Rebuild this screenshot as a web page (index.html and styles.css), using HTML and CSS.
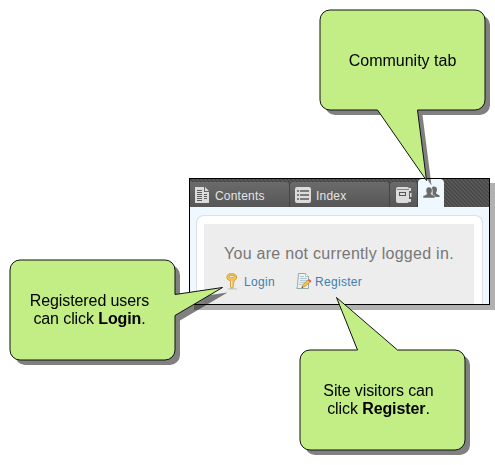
FILE: index.html
```html
<!DOCTYPE html>
<html lang="en">
<head>
<meta charset="utf-8">
<title>Community tab</title>
<link rel="stylesheet" href="styles.css">
</head>
<body>
<main class="panel">
  <nav class="tabs">
    <a class="tab contents">
      <svg width="15" height="17" viewBox="0 0 15 17"><path fill="#dcdcdc" d="M0 0h9v5h5v11H0z M10 0l4 4h-4z"/><path stroke="#5c5c5c" d="M2 3.500h5M2 5.500h5M2 7.500h5M2 9.500h5M2 11.500h5M2 13.500h5M9 7.500h3M9 9.500h3M9 11.500h3"/></svg>
      <span>Contents</span>
    </a>
    <a class="tab index">
      <svg width="16" height="17" viewBox="0 0 16 17"><rect width="16" height="16" rx="2" fill="#dcdcdc"/><path stroke="#5c5c5c" stroke-width="1.500" d="M2 4h2M5 4h9M2 8h2M5 8h9M2 12h2M5 12h9"/></svg>
      <span>Index</span>
    </a>
    <a class="tab book">
      <svg width="16" height="17" viewBox="0 0 16 17"><rect width="13" height="16" rx="2" fill="#dcdcdc"/><path fill="#dcdcdc" d="M13 1h2v3h-2zM14 6h1.500v4H14zM13 12h2v3h-2z"/><path stroke="#888" d="M1 2.500h12"/><rect x="3.500" y="5.500" width="6" height="3" fill="none" stroke="#555"/></svg>
    </a>
    <a class="tab active">
      <svg width="17" height="13" viewBox="0 0 17 13"><path fill="#6a6a6a" d="M9 1.500C10 0 14 0 14 3.500c0 2-1 2.500-1 4l3.500 2V11H10z"/><path fill="#6a6a6a" stroke="#eff7ff" stroke-width=".5" d="M0 12v-2l4-2C2.500 5.500 2.500 1 6 1s4 4.500 2 7l4 2v2z"/></svg>
    </a>
  </nav>
  <section class="frame">
    <div class="content">
      <h1>You are not currently logged in.</h1>
      <div class="links">
        <a class="login">
          <svg width="14" height="17" viewBox="0 0 14 17"><ellipse cx="8.500" cy="15.700" rx="5" ry="1" fill="#d0d0d0"/><path fill="#efc45c" stroke="#c39238" stroke-width=".8" d="M5 .8h5l2.500 2v3L9.800 8.300v1.500l-.8 1 .8 1-.8 1 .5 1L8 15.500 6.500 14V8.300L3 5.800v-3z"/><path stroke="#fff0a8" d="M7.700 8v6"/><rect x="5.500" y="2.500" width="4.500" height="1.700" rx=".8" fill="#fff" stroke="#b9852f" stroke-width=".6"/></svg>
          <span>Login</span>
        </a>
        <a class="register">
          <svg width="16" height="17" viewBox="0 0 16 17"><path fill="#e9f3f5" stroke="#98a9ad" d="M2.500.5h7l3 3v12H.8l.7-3z"/><path fill="#fff" stroke="#98a9ad" stroke-width=".7" d="M9.500.5v3h3"/><path stroke="#b5c8cd" d="M4 3.500h4M4 5.500h7M4 7.500h7M4 9.500h5M3 11.500h3"/><path fill="#f4c244" stroke="#a87c2a" stroke-width=".6" d="M6 14.500l1-3L12 7l2 2-5 4.500z"/><path fill="#e95050" d="M12 7l1-1 2.500 2-1 1.500z"/><path fill="#333" d="M5.500 15l.6-1.500 1 .9z"/></svg>
          <span>Register</span>
        </a>
      </div>
    </div>
  </section>
</main>
<svg class="bubbles" width="495" height="465" viewBox="0 0 495 465">
  <defs>
    <path id="community" d="M330 10H475a10 10 0 0 1 10 10V100a10 10 0 0 1-10 10H417.500L426.500 180.500 377.500 110H330a10 10 0 0 1-10-10V20a10 10 0 0 1 10-10z"/>
    <path id="login" d="M20 260H165a10 10 0 0 1 10 10V294.500L222.500 287.500 175 315.500V350a10 10 0 0 1-10 10H20a10 10 0 0 1-10-10V270a10 10 0 0 1 10-10z"/>
    <path id="register" d="M310 350H357.500L336.500 297.500 397.500 350H455a10 10 0 0 1 10 10V440a10 10 0 0 1-10 10H310a10 10 0 0 1-10-10V360a10 10 0 0 1 10-10z"/>
    <clipPath id="below"><path d="M296 350h199v115H296z"/></clipPath>
  </defs>
  <g class="shade"><use href="#community" x="5" y="5"/><use href="#login" x="5" y="5"/><g clip-path="url(#below)"><use href="#register" x="5" y="5"/></g></g>
  <g class="shape"><use href="#community"/><use href="#login"/><use href="#register"/></g>
</svg>
<p class="note note-community">Community tab</p>
<p class="note note-login">Registered users<br>can click <b>Login</b>.</p>
<p class="note note-register">Site visitors can<br>click <b>Register</b>.</p>
</body>
</html>
```

FILE: styles.css
```css
* { box-sizing: border-box; }
body { margin: 0; width: 495px; height: 465px; overflow: hidden; background: #fff; font-family: "Liberation Sans", Arial, sans-serif; display: flow-root; }
.panel { width: 301px; height: 127px; margin: 178px 0 0 189px; border: 1px solid #000; background: #eff7ff; box-shadow: 5px 5px 0 #b1b1b1; display: flex; flex-direction: column; }
.tabs { height: 28px; flex: none; display: flex; align-items: flex-end; background: repeating-linear-gradient(45deg, #484848 0 1.414px, #5a5a5a 1.414px 2.828px); }
.tab { height: 25px; display: flex; align-items: center; color: #e4e4e4; font-size: 12px; background: linear-gradient(#6b6b6b, #565656); border-right: 1px solid #444; border-radius: 4px 4px 0 0; }
.contents, .index { width: 100px; padding-left: 5px; gap: 5px; letter-spacing: .2px; }
.contents { border-top-left-radius: 0; }
.tab span { position: relative; top: 1px; }
.book { width: 28px; padding-left: 6px; }
.tab svg { position: relative; top: 1px; }
.active { width: 26px; height: 28px; background: #eff7ff; border: 0; padding: 0 0 4px 5px; }
.frame { flex: 1; margin: 8px 6px 0; border: 1px solid #dce0e4; border-bottom: 0; border-radius: 8px 8px 0 0; background: #fff; padding: 8px 8px 0 7px; }
.content { height: 100%; background: #ededed; padding: 20px 0 0 20px; }
h1 { margin: 0; font-size: 16px; line-height: 20px; font-weight: 400; color: #777; letter-spacing: .28px; white-space: nowrap; }
.links { display: flex; margin-top: 9px; color: #417faf; font-size: 12px; line-height: 16px; letter-spacing: .3px; }
.links a { display: flex; align-items: center; }
.login { width: 72px; gap: 6px; }
.register { gap: 3px; }
.bubbles { position: absolute; left: 0; top: 0; }
.shade { fill: #000; opacity: .5; }
.shape { fill: #c2ee85; stroke: #111; stroke-width: 1; }
.note { position: absolute; margin: 0; width: 165px; font-size: 16px; line-height: 18px; text-align: center; color: #000; white-space: nowrap; letter-spacing: -.1px; }
.note-community { left: 320px; top: 52px; letter-spacing: 0; }
.note-login { left: 7px; top: 292px; }
.note-register { left: 296px; top: 382px; }
```
